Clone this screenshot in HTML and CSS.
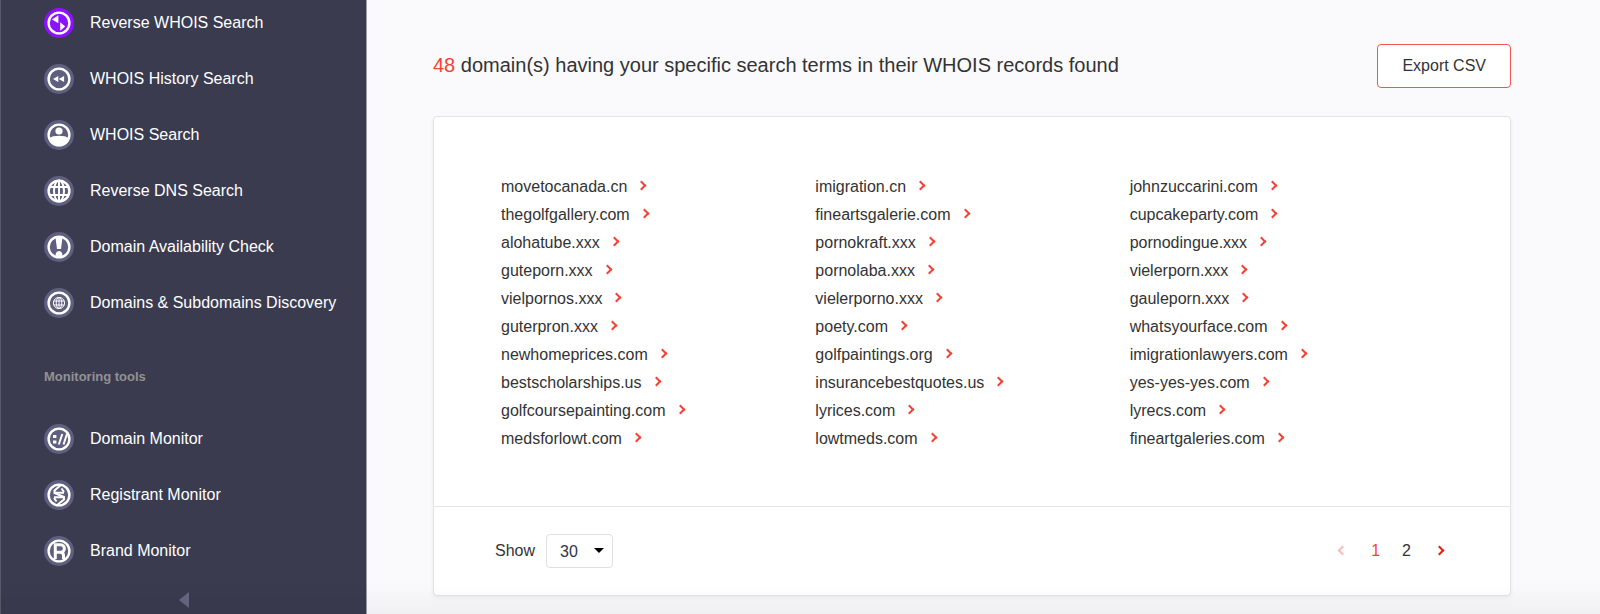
FILE: index.html
```html
<!DOCTYPE html>
<html lang="en">

<head>
    <meta charset="UTF-8">
    <meta name="viewport" content="width=device-width, initial-scale=1.0">
    <title>Reverse WHOIS Search</title>
    <link rel="stylesheet" href="styles.css">
</head>

<body>
    <div class="layout">
        <nav class="sidebar">
            <ul class="menu">
                <li><a href="#" class="active">
                    <svg class="icon" viewBox="0 0 30 30">
                        <circle class="disc" cx="15" cy="15" r="15" />
                        <circle class="ring" cx="15" cy="15" r="10.4" />
                        <path class="fill" d="M8 11.5l6.4-4.2v8zM16.2 14.2l5 4.2-5 4.4z" />
                    </svg>
                    Reverse WHOIS Search</a></li>
                <li><a href="#">
                    <svg class="icon" viewBox="0 0 30 30">
                        <circle class="disc" cx="15" cy="15" r="15" />
                        <circle class="ring" cx="15" cy="15" r="10.4" />
                        <path class="fill" d="M9 15l5.3-3v6zM14.8 15l5.3-3v6z" />
                    </svg>
                    WHOIS History Search</a></li>
                <li><a href="#">
                    <svg class="icon" viewBox="0 0 30 30">
                        <circle class="disc" cx="15" cy="15" r="15" />
                        <circle class="ring" cx="15" cy="15" r="10.4" />
                        <circle class="fill" cx="15" cy="11" r="3.6" />
                        <path class="fill" d="M4.5 18.5c3-2 6.5-2.7 10.5-2.7s7.5.7 10.5 2.7a11 11 0 0 1-21 0z" />
                    </svg>
                    WHOIS Search</a></li>
                <li><a href="#">
                    <svg class="icon" viewBox="0 0 30 30">
                        <circle class="disc" cx="15" cy="15" r="15" />
                        <circle class="ring" cx="15" cy="15" r="10.4" />
                        <ellipse class="line" cx="15" cy="15" rx="5" ry="10.4" />
                        <path class="line" d="M15 4v22M5 11h20M5 19h20" />
                    </svg>
                    Reverse DNS Search</a></li>
                <li><a href="#">
                    <svg class="icon" viewBox="0 0 30 30">
                        <circle class="disc" cx="15" cy="15" r="15" />
                        <circle class="ring" cx="15" cy="15" r="10.4" />
                        <path class="fill" d="M11.3 4h7.4l-1.7 13h-4z" />
                        <path class="fill" d="M11.3 26l.4-4.3a3.4 3.4 0 0 1 6.6 0l.4 4.3z" />
                    </svg>
                    Domain Availability Check</a></li>
                <li><a href="#">
                    <svg class="icon" viewBox="0 0 30 30">
                        <circle class="disc" cx="15" cy="15" r="15" />
                        <circle class="ring" cx="15" cy="15" r="10.4" />
                        <g class="thin">
                            <circle cx="15" cy="15" r="5.6" />
                            <ellipse cx="15" cy="15" rx="2.8" ry="5.6" />
                            <path d="M15 9.4v11.2M9.8 13h10.4M9.8 17h10.4" />
                        </g>
                    </svg>
                    Domains &amp; Subdomains Discovery</a></li>
            </ul>

            <h2 class="menu-title">Monitoring tools</h2>
            <ul class="menu">
                <li><a href="#">
                    <svg class="icon" viewBox="0 0 30 30">
                        <circle class="disc" cx="15" cy="15" r="15" />
                        <circle class="ring" cx="15" cy="15" r="10.4" />
                        <path class="fill" d="M9 11h3.4v3H9zM9 16.500h3.4v3H9z" />
                        <path class="line" d="M14.8 20.5l3.5-10.5M19.5 20.5l3.5-10.5" />
                    </svg>
                    Domain Monitor</a></li>
                <li><a href="#">
                    <svg class="icon" viewBox="0 0 30 30">
                        <circle class="disc" cx="15" cy="15" r="15" />
                        <circle class="ring" cx="15" cy="15" r="10.4" />
                        <path class="line" d="M17.5 4.500L10.500 10.500v2.500L20 17v2.500L12.500 25.500" />
                        <path class="line" d="M17.500 8.500l2.500 3.500M12.500 21.500L10 18M10.500 12.700h9.500M10 17.300h9.500" />
                    </svg>
                    Registrant Monitor</a></li>
                <li><a href="#">
                    <svg class="icon" viewBox="0 0 30 30">
                        <circle class="disc" cx="15" cy="15" r="15" />
                        <circle class="ring" cx="15" cy="15" r="10.4" />
                        <path class="bold" d="M11.3 23V8.8h5.4a3.3 3.3 0 0 1 0 7.4h-5.4M16.5 16.2q3 .3 3 3.3V23" />
                    </svg>
                    Brand Monitor</a></li>
            </ul>

            <button class="collapse" type="button" aria-label="Collapse menu">
                <svg viewBox="0 0 10 16">
                    <path d="M10 0v16L0 8z" />
                </svg>
            </button>
        </nav>

        <main class="content">
            <header class="results-header">
                <h1><span class="count">48</span> domain(s) having your specific search terms in their WHOIS records found</h1>
                <button class="export" type="button">Export CSV</button>
            </header>

            <section class="card">
                <div class="domains">
                    <ul>
                        <li><a href="#">movetocanada.cn</a></li>
                        <li><a href="#">thegolfgallery.com</a></li>
                        <li><a href="#">alohatube.xxx</a></li>
                        <li><a href="#">guteporn.xxx</a></li>
                        <li><a href="#">vielpornos.xxx</a></li>
                        <li><a href="#">guterpron.xxx</a></li>
                        <li><a href="#">newhomeprices.com</a></li>
                        <li><a href="#">bestscholarships.us</a></li>
                        <li><a href="#">golfcoursepainting.com</a></li>
                        <li><a href="#">medsforlowt.com</a></li>
                    </ul>
                    <ul>
                        <li><a href="#">imigration.cn</a></li>
                        <li><a href="#">fineartsgalerie.com</a></li>
                        <li><a href="#">pornokraft.xxx</a></li>
                        <li><a href="#">pornolaba.xxx</a></li>
                        <li><a href="#">vielerporno.xxx</a></li>
                        <li><a href="#">poety.com</a></li>
                        <li><a href="#">golfpaintings.org</a></li>
                        <li><a href="#">insurancebestquotes.us</a></li>
                        <li><a href="#">lyrices.com</a></li>
                        <li><a href="#">lowtmeds.com</a></li>
                    </ul>
                    <ul>
                        <li><a href="#">johnzuccarini.com</a></li>
                        <li><a href="#">cupcakeparty.com</a></li>
                        <li><a href="#">pornodingue.xxx</a></li>
                        <li><a href="#">vielerporn.xxx</a></li>
                        <li><a href="#">gauleporn.xxx</a></li>
                        <li><a href="#">whatsyourface.com</a></li>
                        <li><a href="#">imigrationlawyers.com</a></li>
                        <li><a href="#">yes-yes-yes.com</a></li>
                        <li><a href="#">lyrecs.com</a></li>
                        <li><a href="#">fineartgaleries.com</a></li>
                    </ul>
                </div>

                <footer class="card-footer">
                    <div class="page-size">
                        <label for="pageSize">Show</label>
                        <div class="select-wrap">
                            <select id="pageSize">
                                <option>30</option>
                                <option>60</option>
                                <option>90</option>
                            </select>
                        </div>
                    </div>
                    <div class="pagination">
                        <a href="#" class="prev" aria-label="Previous page"></a>
                        <a href="#" class="current">1</a>
                        <a href="#">2</a>
                        <a href="#" class="next" aria-label="Next page"></a>
                    </div>
                </footer>
            </section>
        </main>
    </div>
    <div class="fade"></div>
</body>

</html>
```
FILE: styles.css
```css
*,
*::after {
    box-sizing: border-box;
}

body {
    margin: 0;
    font-family: "Helvetica Neue", Helvetica, "Liberation Sans", Arial, sans-serif;
    font-size: 16px;
    color: #333;
    background-color: #fafafc;
}

ul {
    list-style: none;
    margin: 0;
    padding: 0;
}

a {
    color: inherit;
    text-decoration: none;
}

.layout {
    display: flex;
    min-height: 100vh;
}

/* Sidebar */
.sidebar {
    flex: 0 0 367px;
    display: flex;
    flex-direction: column;
    padding: 8px 0 0 43px;
    background-color: #3a3b4f;
    border-left: 1px solid #5a5b6a;
    border-right: 1px solid #9c9ca8;
    color: #fff;
}

.menu a {
    display: flex;
    align-items: center;
    gap: 16px;
    height: 30px;
    margin-bottom: 26px;
}

.icon {
    width: 30px;
    height: 30px;
}

.disc {
    fill: #5f607f;
}

.active .disc {
    fill: #8c12ff;
}

.ring,
.line,
.thin,
.bold {
    fill: none;
    stroke: #fff;
    stroke-width: 2;
}

.ring {
    stroke-width: 2.4;
}

.thin {
    stroke-width: 1;
}

.bold {
    stroke-width: 3;
}

.fill {
    fill: #fff;
}

.menu-title {
    margin: 23px 0 37px;
    font-size: 13px;
    line-height: 20px;
    color: #929292;
}

.collapse {
    align-self: flex-start;
    width: 10px;
    height: 16px;
    margin: 0 0 0 135px;
    padding: 0;
    border: none;
    background: none;
    cursor: pointer;
}

.collapse svg {
    display: block;
    fill: #666781;
}

/* Results */
.content {
    flex: 1;
    padding: 44px 89px 18px 66px;
}

.results-header {
    display: flex;
    justify-content: space-between;
    align-items: center;
    margin-bottom: 28px;
}

h1 {
    margin: 0;
    padding-bottom: 2px;
    font-size: 20px;
    font-weight: normal;
}

.count {
    color: #f44336;
}

.export {
    height: 44px;
    padding: 0 24px;
    font: inherit;
    color: #333;
    background-color: #fff;
    border: 1px solid #f0574e;
    border-radius: 4px;
    cursor: pointer;
}

.card {
    background-color: #fff;
    border: 1px solid #e4e4e6;
    border-radius: 4px;
    box-shadow: 0 2px 4px rgba(0, 0, 0, 0.06);
}

.domains {
    display: grid;
    grid-template-columns: repeat(3, 1fr);
    padding: 56px 66px 53px 67px;
    line-height: 28px;
    border-bottom: 1px solid #e4e4e6;
}

.domains a::after,
.prev::after,
.next::after {
    content: "";
    display: inline-block;
    width: 7px;
    height: 7px;
    border: solid #f44336;
    border-width: 2px 2px 0 0;
    transform: rotate(45deg);
}

.domains a::after {
    margin: 0 0 3px 11px;
}

.card-footer {
    display: flex;
    justify-content: space-between;
    align-items: center;
    padding: 27px 67px 27px 61px;
}

.page-size {
    display: flex;
    align-items: center;
    gap: 11px;
}

.select-wrap {
    position: relative;
}

.select-wrap::after {
    content: "";
    position: absolute;
    right: 9px;
    top: 14px;
    border: 5px solid transparent;
    border-top-color: #000;
    border-bottom: 0;
    pointer-events: none;
}

select {
    appearance: none;
    display: block;
    width: 67px;
    height: 34px;
    padding: 0 13px;
    font: inherit;
    color: #2c3644;
    background-color: #fff;
    border: 1px solid #e0e0e2;
    border-radius: 4px;
}

.pagination {
    display: flex;
    align-items: center;
    gap: 22px;
}

.pagination .current {
    color: #f44336;
}

.prev {
    margin-right: 3px;
    opacity: 0.35;
}

.next {
    margin-left: 3px;
}

.prev::after {
    transform: rotate(-135deg);
}

.prev::after,
.next::after {
    margin-bottom: 2px;
}

.next::after {
    border-color: #e3200f;
}

/* Soft shade along the bottom of the window */
.fade {
    position: fixed;
    left: 0;
    right: 0;
    bottom: 0;
    height: 30px;
    background: linear-gradient(rgba(0, 0, 0, 0), rgba(0, 0, 0, 0.04));
    pointer-events: none;
}
```
